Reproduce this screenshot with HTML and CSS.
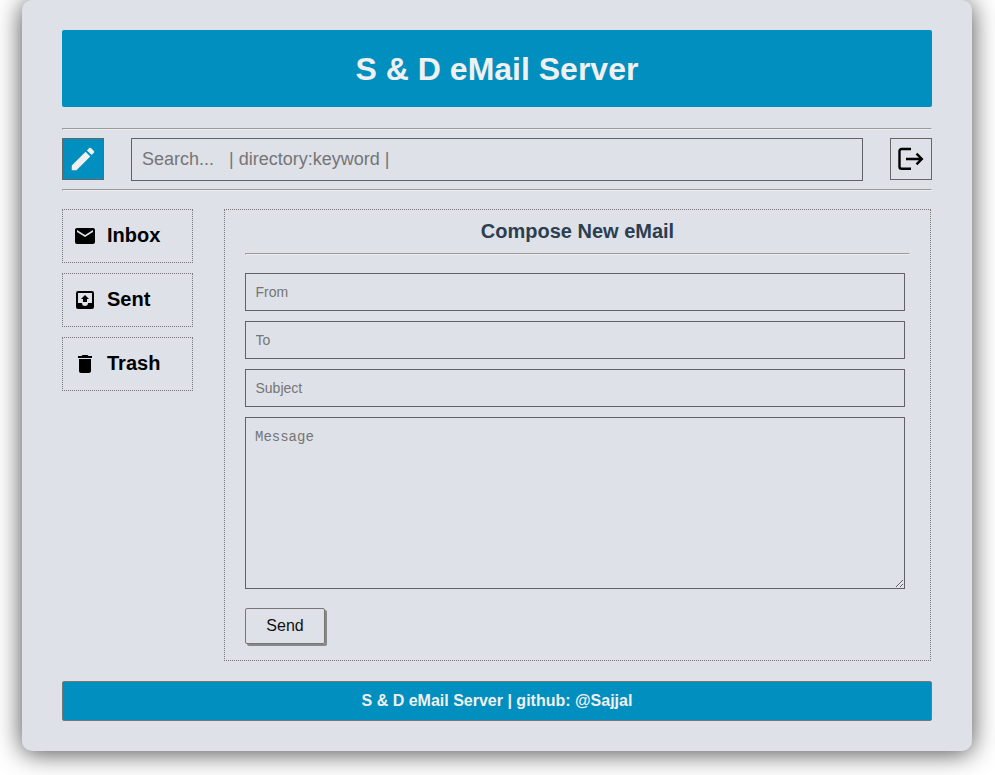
FILE: index.html
```html
<!DOCTYPE html>
<html lang="en">
<head>
<meta charset="utf-8">
<title>S &amp; D eMail Server</title>
<link rel="stylesheet" href="styles.css">
</head>
<body>
<div class="container">
  <header class="header"><h1>S &amp; D eMail Server</h1></header>
  <hr>
  <div class="toolbar">
    <button class="icon-btn compose-btn" aria-label="Compose"><svg width="30" height="30" viewBox="0 0 24 24"><path d="M3 17.25V21h3.75L17.81 9.94l-3.75-3.75L3 17.25zM20.71 7.04a1 1 0 0 0 0-1.41l-2.34-2.34a1 1 0 0 0-1.41 0l-1.83 1.83 3.75 3.75 1.83-1.83z"/></svg></button>
    <input class="search" type="text" placeholder="Search...   | directory:keyword |">
    <button class="icon-btn" aria-label="Log out"><svg width="30" height="30" viewBox="0 0 30 30"><path d="M15 5H5.500a2 2 0 0 0-2 2v15.700a2 2 0 0 0 2 2H15M10 15h16M20.500 9.700l5.300 5.300-5.300 5.300" class="stroke"/></svg></button>
  </div>
  <hr>
  <div class="content">
    <nav class="sidebar">
      <a class="folder"><svg width="24" height="24" viewBox="0 0 24 24"><path d="M20 4H4c-1.100 0-1.990.9-1.990 2L2 18c0 1.100.9 2 2 2h16c1.100 0 2-.9 2-2V6c0-1.100-.9-2-2-2zm0 4l-8 5-8-5V6l8 5 8-5v2z"/></svg><span>Inbox</span></a>
      <a class="folder"><svg width="24" height="24" viewBox="0 0 24 24"><path d="M19 3H5a2 2 0 0 0-2 2v14a2 2 0 0 0 2 2h14a2 2 0 0 0 2-2V5a2 2 0 0 0-2-2zm0 12h-4a3 3 0 0 1-6 0H5V5h14v10zM8 11h2v3h4v-3h2l-4-4-4 4z"/></svg><span>Sent</span></a>
      <a class="folder"><svg width="24" height="24" viewBox="0 0 24 24"><path d="M6 19c0 1.100.9 2 2 2h8c1.100 0 2-.9 2-2V7H6v12zM19 4h-3.500l-1-1h-5l-1 1H5v2h14V4z"/></svg><span>Trash</span></a>
    </nav>
    <main class="panel">
      <h2>Compose New eMail</h2>
      <hr>
      <form class="form">
        <input class="field" type="text" placeholder="From">
        <input class="field" type="text" placeholder="To">
        <input class="field" type="text" placeholder="Subject">
        <textarea class="field message" placeholder="Message"></textarea>
        <button class="send" type="button">Send</button>
      </form>
    </main>
  </div>
  <footer class="footer">S &amp; D eMail Server | github: @Sajjal</footer>
</div>
</body>
</html>
```

FILE: styles.css
```css
* { box-sizing: border-box; }

body {
  min-height: 775px;
  margin: 0;
  background: #fff;
  font-family: "Liberation Sans", Arial, sans-serif;
}

.container {
  width: 950px;
  height: 751px;
  margin-left: 22px;
  padding: 30px 40px;
  background: #dee1e8;
  border-radius: 10px;
  box-shadow: 0 2px 26px #484848;
}

hr {
  height: 2px;
  margin: 0;
  border: 1px solid;
  border-color: #9a9a9a #eee #eee #9a9a9a;
}

.header {
  height: 77px;
  margin-bottom: 21px;
  padding-top: 2px;
  display: flex;
  align-items: center;
  justify-content: center;
  background: #008fbf;
  border-radius: 2px;
}

h1 {
  margin: 0;
  color: #f0f0f0;
  font-size: 32px;
  line-height: 37px;
}

.toolbar {
  height: 59px;
  padding: 8px 0;
  display: flex;
  align-items: flex-start;
  justify-content: space-between;
}

.icon-btn {
  width: 42px;
  height: 42px;
  padding: 0;
  display: grid;
  place-items: center;
  background: none;
  border: 1px solid #666;
}

.compose-btn { background: #008fbf; fill: #f0f0f0; }

.stroke { fill: none; stroke: #000; stroke-width: 2.4; }

.search {
  width: 732px;
  height: 43px;
  padding: 0 10px;
  background: transparent;
  border: 1px solid #606266;
  font: 18px "Liberation Sans", Arial, sans-serif;
}

::placeholder { color: #757575; }

.content {
  margin-top: 18px;
  display: flex;
  gap: 31px;
}

.sidebar {
  width: 131px;
  display: flex;
  flex-direction: column;
  gap: 10px;
}

.folder {
  height: 54px;
  padding-left: 10px;
  display: flex;
  align-items: center;
  gap: 10px;
  border: 1px dotted #777;
  font-size: 20px;
  font-weight: bold;
}

.folder span { padding-bottom: 1px; }

.panel {
  width: 707px;
  height: 452px;
  padding: 9px 20px;
  border: 1px dotted #777;
}

h2 {
  margin: 0 0 9px;
  color: #2c3e50;
  font-size: 20px;
  line-height: 25px;
  text-align: center;
}

.form {
  margin-top: 18px;
  display: flex;
  flex-direction: column;
  align-items: flex-start;
  gap: 10px;
}

.field {
  width: 660px;
  height: 38px;
  padding: 10px 9.5px;
  background: transparent;
  border: 1px solid #606266;
  font: 14px "Liberation Sans", Arial, sans-serif;
}

.message {
  height: 172px;
  padding: 11px 9px;
  font: 14px "Liberation Mono", monospace;
}

.send {
  width: 80px;
  height: 36px;
  margin-top: 9px;
  padding: 0;
  background: transparent;
  border: 1px solid #777;
  border-radius: 2px;
  box-shadow: 2px 2px #888;
  color: #111;
  font: 16px "Liberation Sans", Arial, sans-serif;
}

.footer {
  height: 40px;
  margin-top: 20px;
  display: flex;
  align-items: center;
  justify-content: center;
  background: #008fbf;
  border: 1px solid #777;
  border-radius: 2px;
  color: #f0f0f0;
  font-size: 16px;
  font-weight: bold;
}
```
